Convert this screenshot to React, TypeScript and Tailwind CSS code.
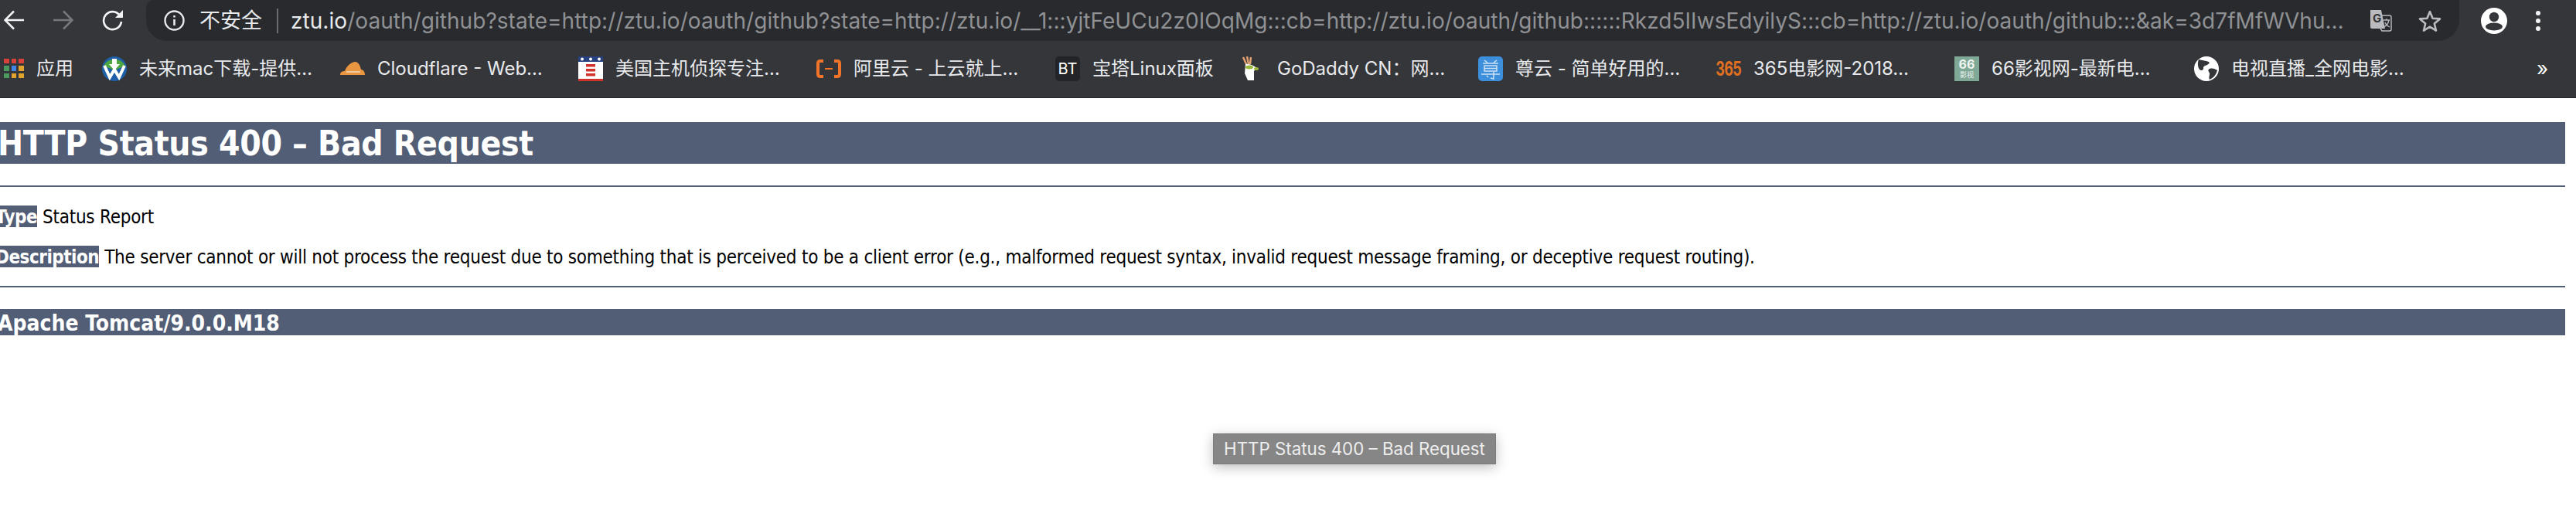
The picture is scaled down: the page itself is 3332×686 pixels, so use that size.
import { ReactNode } from 'react'

function AppsIcon() {
  const colors = ['bg-[#d8423a]', 'bg-[#d8423a]', 'bg-[#d8423a]', 'bg-[#4b9a5f]', 'bg-[#3f86e8]', 'bg-[#e0a32e]', 'bg-[#4b9a5f]', 'bg-[#e0a32e]', 'bg-[#e0a32e]']
  return (
    <div className="grid h-[26px] w-[26px] grid-cols-3 gap-[3px]">
      {colors.map((c, i) => (
        <div key={i} className={`h-[6.5px] w-[6.5px] ${c}`} />
      ))}
    </div>
  )
}

function WIcon() {
  return (
    <svg width="32" height="32" viewBox="0 0 32 32">
      <circle cx="16" cy="16" r="16" fill="#1f5fa8" />
      <path d="M2 12A16 16 0 0 1 30 12L16 18Z" fill="#4fa53f" />
      <path d="M3 12L10 27L16 17L22 27L29 12" fill="none" stroke="#fff" strokeWidth="4" />
      <path d="M13 3H19V10H23L16 18L9 10H13Z" fill="#fff" />
    </svg>
  )
}

function CloudIcon() {
  return (
    <svg width="32" height="32" viewBox="0 0 32 32">
      <path d="M0 24C0 20 3 19 6 19C8 13 14 7 20 7C24 8 26 12 27 17C30 17 32 20 32 24Z" fill="#e8963f" />
      <path d="M8 20H26" stroke="#fff" strokeWidth="1" />
    </svg>
  )
}

function FlagIcon() {
  return (
    <svg width="32" height="32" viewBox="0 0 32 32">
      <rect width="32" height="32" fill="#fff" />
      <rect width="32" height="7" fill="#27407f" />
      <circle cx="5" cy="3.5" r="2" fill="#fff" />
      <circle cx="16" cy="3.5" r="2" fill="#fff" />
      <circle cx="27" cy="3.5" r="2" fill="#fff" />
      <rect x="10" y="10" width="12" height="3.5" fill="#d0312a" />
      <rect x="10" y="16" width="12" height="3.5" fill="#d0312a" />
      <rect x="10" y="22" width="12" height="3.5" fill="#d0312a" />
      <rect y="29" width="32" height="3" fill="#d0312a" />
    </svg>
  )
}

function AliyunIcon() {
  return (
    <svg width="32" height="32" viewBox="0 0 32 32" fill="none">
      <path d="M9 6H5C3 6 2 7 2 9V23C2 25 3 26 5 26H9M23 6H27C29 6 30 7 30 9V23C30 25 29 26 27 26H23" stroke="#f1742a" strokeWidth="4" />
      <path d="M11 16H21" stroke="#f1742a" strokeWidth="2" />
    </svg>
  )
}

function GoDaddyIcon() {
  return (
    <svg width="32" height="32" viewBox="0 0 32 32">
      <path d="M4 1L8 10M9 0L11 10M14 1L13 10" stroke="#e0a070" strokeWidth="2.5" fill="none" />
      <path d="M7 10C12 9 17 12 22 15L18 19L18 31L10 31L6 22Z" fill="#fff" />
      <ellipse cx="12" cy="14" rx="5" ry="2.5" fill="#9bb73a" />
      <ellipse cx="21" cy="16" rx="3" ry="2" fill="#9bb73a" />
    </svg>
  )
}

function ZunIcon() {
  return (
    <svg width="32" height="32" viewBox="0 0 32 32" fill="none">
      <rect width="32" height="32" rx="5" fill="#3d8fdc" />
      <path d="M8 5L12 8M24 5L20 8M6 9H26M8 12H24V19H8ZM8 15.5H24M4 23H28M20 20V29L16 28M11 25L13 27" stroke="#cfe3f6" strokeWidth="1.5" />
    </svg>
  )
}

function EarthIcon() {
  return (
    <svg width="32" height="32" viewBox="0 0 32 32">
      <circle cx="16" cy="16" r="16" fill="#fff" />
      <path d="M6 4C12 6 17 5 20 8C18 12 14 11 12 14C13 18 9 19 7 17C5 14 4 9 6 4Z" fill="#35363a" />
      <path d="M20 16C24 15 27 16 30 18C29 23 25 28 20 30C18 26 22 23 19 20C18 18 18 17 20 16Z" fill="#35363a" />
    </svg>
  )
}

type Mark = { width: string; icon: ReactNode; text: string }

const marks: Mark[] = [
  { width: 'w-[127px]', icon: <AppsIcon />, text: '应用' },
  { width: 'w-[308px]', icon: <WIcon />, text: '未来mac下载-提供…' },
  { width: 'w-[308px]', icon: <CloudIcon />, text: 'Cloudflare - Web…' },
  { width: 'w-[308px]', icon: <FlagIcon />, text: '美国主机侦探专注…' },
  { width: 'w-[309px]', icon: <AliyunIcon />, text: '阿里云 - 上云就上…' },
  {
    width: 'w-[239px]',
    icon: <div className="flex h-[32px] w-[32px] shrink-0 items-center justify-center rounded-[5px] bg-[#232427] text-[20px] text-white">BT</div>,
    text: '宝塔Linux面板',
  },
  { width: 'w-[308px]', icon: <GoDaddyIcon />, text: 'GoDaddy CN：网…' },
  { width: 'w-[308px]', icon: <ZunIcon />, text: '尊云 - 简单好用的…' },
  {
    width: 'w-[308px]',
    icon: (
      <div className="flex h-[32px] w-[32px] shrink-0 items-center justify-center text-[#e0701f]">
        <span className="shrink-0 scale-x-[0.72] text-[25px] font-bold tracking-[-1px]">365</span>
      </div>
    ),
    text: '365电影网-2018…',
  },
  {
    width: 'w-[310px]',
    icon: (
      <div className="flex h-[32px] w-[32px] shrink-0 flex-col items-center justify-center bg-[#7fa897] text-center text-[#eef5f0]">
        <span className="text-[16px] font-bold leading-[16px]">66</span>
        <span className="text-[9px] leading-[12px]">影视</span>
      </div>
    ),
    text: '66影视网-最新电…',
  },
  { width: 'w-[300px]', icon: <EarthIcon />, text: '电视直播_全网电影…' },
]

const url =
  '/oauth/github?state=http://ztu.io/oauth/github?state=http://ztu.io/__1:::yjtFeUCu2z0IOqMg:::cb=http://ztu.io/oauth/github::::::Rkzd5IIwsEdyilyS:::cb=http://ztu.io/oauth/github:::&ak=3d7fMfWVhu…'

export default function App() {
  return (
    <div className="relative h-[686px] w-[3332px] overflow-hidden bg-white font-['DejaVu_Sans_Condensed','DejaVu_Sans',sans-serif] [font-stretch:condensed]">
      <div className="border-b border-[#232427] bg-[#35363a] font-['Inter','Noto_Sans_CJK_SC',sans-serif] [font-stretch:normal]">
        <div className="flex h-[53px] items-center pl-[5px]">
          <svg width="26" height="26" viewBox="0 0 26 26" fill="none" stroke="#f1f3f4" strokeWidth="2.6" className="mb-[2px]">
            <path d="M26 13H2M13 1.5L1.5 13L13 24.5" />
          </svg>
          <svg width="26" height="26" viewBox="0 0 26 26" fill="none" stroke="#76787b" strokeWidth="2.6" className="mb-[2px] ml-[38px]">
            <path d="M0 13H24M13 1.5L24.5 13L13 24.5" />
          </svg>
          <svg width="28" height="28" viewBox="0 0 28 28" fill="none" className="mb-[2px] ml-[37px]">
            <path d="M23 8A11.5 11.5 0 1 0 25 16" stroke="#f1f3f4" strokeWidth="2.6" />
            <path d="M27 1V11H17Z" fill="#f1f3f4" />
          </svg>
          <div className="ml-[29px] flex h-[53px] w-[2992px] items-center rounded-b-[27px] rounded-tl-[10px] bg-[#292a2d] pl-[23px]">
            <svg width="27" height="27" viewBox="0 0 27 27" fill="none" className="mb-[1px]">
              <circle cx="13.5" cy="13.5" r="12" stroke="#e8eaed" strokeWidth="2.4" />
              <path d="M13.5 12V20M13.5 7V9.5" stroke="#e8eaed" strokeWidth="2.6" />
            </svg>
            <span className="ml-[19px] text-[27px] leading-[32px] text-[#e8eaed]">不安全</span>
            <div className="ml-[19px] h-[32px] w-[2px] bg-[#6a6c70]" />
            <div className="ml-[16px] w-[2648px] whitespace-nowrap text-[28px] leading-[36px] tracking-[0.05px] text-[#8f9194]">
              <span className="text-[#e8eaed]">ztu.io</span>
              {url}
            </div>
            <svg width="29" height="29" viewBox="0 0 29 29" className="ml-[41px]">
              <path d="M1 1H15L20 25H3C2 25 1 24 1 23Z" fill="#b9bbbe" />
              <path d="M14 8H26C27 8 28 9 28 10V26C28 27 27 28 26 28H16L14 25" fill="none" stroke="#b9bbbe" strokeWidth="1.4" />
              <text x="4" y="17" fontSize="15" fontWeight="700" fontFamily="Inter" fill="#35363a">G</text>
              <path d="M18 14H26M22 12V14M25 14C24 19 21 22 18 23M20 17C21 20 24 22 26 23" stroke="#b9bbbe" strokeWidth="1.3" fill="none" />
            </svg>
            <svg width="30" height="30" viewBox="0 0 30 30" fill="none" className="ml-[34px]">
              <path d="M15 3L18.6 11.7L28 12.4L20.8 18.5L23 27.6L15 22.7L7 27.6L9.2 18.5L2 12.4L11.4 11.7Z" stroke="#b9bbbe" strokeWidth="2.6" strokeLinejoin="round" />
            </svg>
          </div>
          <svg width="36" height="36" viewBox="0 0 36 36" className="ml-[27px]">
            <circle cx="18" cy="18" r="17" fill="#fff" />
            <circle cx="18" cy="13" r="6.2" fill="#35363a" />
            <ellipse cx="18" cy="25.5" rx="11" ry="5" fill="#35363a" />
          </svg>
          <div className="ml-[36px] flex flex-col gap-[4px]">
            <div className="h-[6px] w-[6px] rounded-full bg-[#f1f3f4]" />
            <div className="h-[6px] w-[6px] rounded-full bg-[#f1f3f4]" />
            <div className="h-[6px] w-[6px] rounded-full bg-[#f1f3f4]" />
          </div>
        </div>
        <div className="flex h-[73px] items-center pb-[2px] pl-[5px] text-[24px] leading-[30px] text-[#e8eaed]">
          {marks.map((m) => (
            <div key={m.text} className={`flex shrink-0 items-center gap-[16px] whitespace-nowrap ${m.width}`}>
              {m.icon}
              <span>{m.text}</span>
            </div>
          ))}
          <span className="ml-[143px] text-[26px] leading-none text-white">»</span>
        </div>
      </div>

      <div className="mr-[14px]">
        <h1 className="mt-[31px] flex h-[54px] items-center bg-[#525d76] text-[44px] font-bold leading-none tracking-[-0.3px] text-white">
          <span className="-ml-[3px] mt-[2px]">HTTP Status 400 – Bad Request</span>
        </h1>
        <hr className="mt-[28px] border-t-2 border-[#525d76]" />
        <p className="mt-[24px] flex h-[28px] gap-[7px] text-[24px] leading-[30px] tracking-[-0.25px] text-black">
          <b className="-ml-[6px] h-[28px] bg-[#525d76] tracking-[-0.5px] text-white">Type</b>
          <span>Status Report</span>
        </p>
        <p className="mt-[24px] flex h-[28px] gap-[7px] whitespace-nowrap text-[24px] leading-[30px] tracking-[-0.25px] text-black">
          <b className="-ml-[6px] h-[28px] bg-[#525d76] tracking-[-0.5px] text-white">Description</b>
          <span>The server cannot or will not process the request due to something that is perceived to be a client error (e.g., malformed request syntax, invalid request message framing, or deceptive request routing).</span>
        </p>
        <hr className="mt-[24px] border-t-2 border-[#525d76]" />
        <h3 className="mt-[28px] flex h-[34px] items-center bg-[#525d76] text-[28px] font-bold leading-none text-white">
          <span className="-ml-[3px] mt-[3px]">Apache Tomcat/9.0.0.M18</span>
        </h3>
      </div>

      <div className="absolute left-[1569px] top-[561px] flex h-[40px] w-[366px] items-center justify-center border border-[#7a7a7a] bg-[#868686] pt-[1px] font-['Inter',sans-serif] text-[22.3px] leading-none text-[#eeeeee] [font-stretch:normal] shadow-[0_4px_16px_rgba(0,0,0,0.25)]">
        HTTP Status 400 – Bad Request
      </div>
    </div>
  )
}
